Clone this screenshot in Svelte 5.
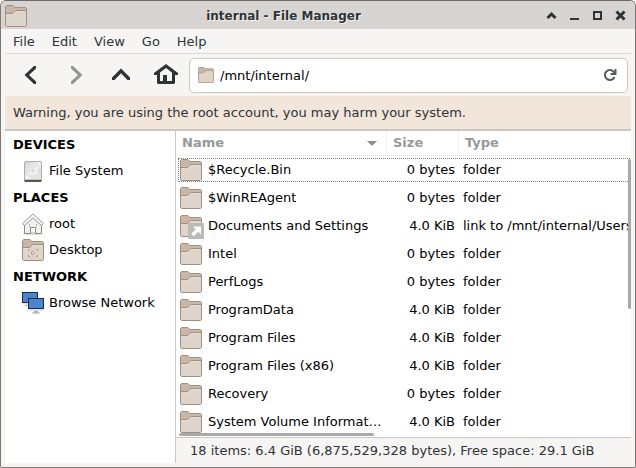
<script>
  const menus = ['File', 'Edit', 'View', 'Go', 'Help'];

  const sections = [
    { title: 'Devices', items: [{ name: 'File System', icon: 'drive' }] },
    {
      title: 'Places',
      items: [
        { name: 'root', icon: 'home' },
        { name: 'Desktop', icon: 'desktop' },
      ],
    },
    { title: 'Network', items: [{ name: 'Browse Network', icon: 'network' }] },
  ];

  const files = [
    { name: '$Recycle.Bin', size: '0 bytes', type: 'folder', focused: true },
    { name: '$WinREAgent', size: '0 bytes', type: 'folder' },
    { name: 'Documents and Settings', size: '4.0 KiB', type: 'link to /mnt/internal/Users', link: true },
    { name: 'Intel', size: '0 bytes', type: 'folder' },
    { name: 'PerfLogs', size: '0 bytes', type: 'folder' },
    { name: 'ProgramData', size: '4.0 KiB', type: 'folder' },
    { name: 'Program Files', size: '4.0 KiB', type: 'folder' },
    { name: 'Program Files (x86)', size: '4.0 KiB', type: 'folder' },
    { name: 'Recovery', size: '0 bytes', type: 'folder' },
    { name: 'System Volume Information', size: '4.0 KiB', type: 'folder' },
  ];

  let path = $state('/mnt/internal/');
</script>

{#snippet folder(size)}
  <svg width={size} height={size} viewBox="0 0 22 22" aria-hidden="true">
    <path d="M.5 20.5V1.5l1-1H8l2 2h10.5l1 1v17z" fill="#c8b6a6" stroke="#a38f7f" />
    <path d="M.5 8.5h7.2l3-3h10.8v15l-1 1h-19l-1-1z" fill="#ded4ca" stroke="#a38f7f" />
    <path d="M1.5 9.5h6.7l3-3h9.3" fill="none" stroke="#e7dfd7" />
  </svg>
{/snippet}

{#snippet placeIcon(kind)}
  {#if kind === 'drive'}
    <svg width="24" height="24" viewBox="0 0 24 24" aria-hidden="true">
      <defs>
        <linearGradient id="metal" x2="1" y2="1">
          <stop offset="0" stop-color="#d2d2ce" />
          <stop offset=".5" stop-color="#f4f4f2" />
          <stop offset="1" stop-color="#dcdcd9" />
        </linearGradient>
      </defs>
      <rect x="3.500" y="2.500" width="17" height="20" rx="1.500" fill="url(#metal)" stroke="#adada9" />
      <ellipse cx="12" cy="11" rx="7" ry="7.500" fill="#e6e6e3" stroke="#d8d8d5" />
      <path d="M6 15l5-3.500L18 6l-3 10z" fill="#f2f2f0" />
      <circle cx="12" cy="12" r="1.500" fill="#d4d4d1" />
      <path d="M4 20h16v1H4z" fill="#c2c2be" />
      <path d="M3.500 21h17v1.500l-1 .5h-15l-1-.5z" fill="#555753" />
    </svg>
  {:else if kind === 'home'}
    <svg width="24" height="24" viewBox="0 0 24 24" aria-hidden="true">
      <ellipse cx="12" cy="21.500" rx="10" ry="1.500" fill="#d6d6d4" />
      <path d="M3.500 11v10.500h6v-6h5v6h6V11L12 4z" fill="#f0f0ee" stroke="#888a85" />
      <path d="M12 2L1.500 11.500l2 2L12 6l8.500 7.500 2-2z" fill="#f4f4f2" stroke="#999b96" stroke-linejoin="round" />
      <path d="M8 12h1v3H8zM15 12h1v3h-1z" fill="#b6b8b3" />
    </svg>
  {:else if kind === 'desktop'}
    <span class="pad-icon">
      {@render folder(22)}
      <svg class="mark" width="12" height="10" viewBox="0 0 12 10" aria-hidden="true">
        <path d="M1.500 3V1.500H3M9 1.500h1.500V3M1.500 7v1.500H3M9 8.500h1.500V7M4.500 3.500h2l1 1v1l-1 1h-2z" fill="none" stroke="#b5a18f" />
      </svg>
    </span>
  {:else}
    <svg width="24" height="24" viewBox="0 0 24 24" aria-hidden="true">
      <rect x="1.500" y="1.500" width="15" height="10" fill="#4a86cf" stroke="#1b2b48" />
      <path d="M2 12h6v2H2z" fill="#e6e6e3" />
      <path d="M4 14h4v1H4z" fill="#b9bab6" />
      <rect x="7.500" y="7.500" width="15" height="10" fill="#4a86cf" stroke="#1b2b48" />
      <path d="M8 18h14v2H8z" fill="#e2e2df" />
      <path d="M13 20h4v1.500h2v1h-8v-1h2z" fill="#b0b1ad" />
    </svg>
  {/if}
{/snippet}

<div class="window">
  <header class="titlebar">
    {@render folder(22)}
    <h1>internal - File Manager</h1>
    <div class="controls">
      <button aria-label="Roll up"><svg width="11" height="11" viewBox="0 0 11 11"><path d="M1.500 8l4-4 4 4" class="bold" /></svg></button>
      <button aria-label="Minimize"><svg width="11" height="11" viewBox="0 0 11 11"><path d="M1 9h9" /></svg></button>
      <button aria-label="Maximize"><svg width="11" height="11" viewBox="0 0 11 11"><path d="M2 2h7v7H2z" /></svg></button>
      <button aria-label="Close"><svg width="11" height="11" viewBox="0 0 11 11"><path d="M1.500 1.500l8 8M9.500 1.500l-8 8" class="bold" /></svg></button>
    </div>
  </header>

  <nav class="menubar" aria-label="Menu">
    {#each menus as menu}
      <button>{menu}</button>
    {/each}
  </nav>

  <div class="toolbar">
    <button aria-label="Back"><svg width="25" height="24" viewBox="0 0 25 24"><path class="solid" d="M18 3h-2L6.500 12l9.500 9h2v-2.500L11 12l7-6.500z" /></svg></button>
    <button aria-label="Forward" disabled><svg width="25" height="24" viewBox="0 0 25 24"><path class="solid" d="M8 3h2l9.500 9-9.500 9H8v-2.500L15 12 8 5.500z" /></svg></button>
    <button aria-label="Parent folder"><svg width="25" height="24" viewBox="0 0 25 24"><path class="solid" d="M4 17v-2.500L13 5.500l9 9V17h-2.500L13 10.200 6.500 17z" /></svg></button>
    <button aria-label="Home">
      <svg width="25" height="24" viewBox="0 0 25 24">
        <path class="solid" fill-rule="evenodd" d="M13 1l12 9v2h-3v8l-1 1H5l-1-1v-8H1v-2zM7 9.500V18h3v-6h4v6h5V9.500l-6-4.500z" />
      </svg>
    </button>
    <div class="location">
      {@render folder(16)}
      <input type="text" aria-label="Location" bind:value={path} />
      <button aria-label="Reload">
        <svg width="14" height="14" viewBox="0 0 14 14">
          <path d="M11 4A5 5 0 1 0 11.500 9" class="arc" />
          <path d="M13.500 1v6h-6V5h2l2-2V1z" class="solid" />
        </svg>
      </button>
    </div>
  </div>

  <p class="warning" role="alert">Warning, you are using the root account, you may harm your system.</p>

  <div class="body">
    <aside>
      {#each sections as section}
        <h2>{section.title}</h2>
        <ul>
          {#each section.items as item}
            <li><a href="#{item.icon}">{@render placeIcon(item.icon)}{item.name}</a></li>
          {/each}
        </ul>
      {/each}
    </aside>

    <main>
      <div class="view">
        <table>
          <colgroup>
            <col class="c-name" />
            <col class="c-size" />
            <col />
          </colgroup>
          <thead>
            <tr>
              <th aria-sort="ascending"><span class="sort">Name <i></i></span></th>
              <th>Size</th>
              <th>Type</th>
            </tr>
          </thead>
          <tbody>
            {#each files as file}
              <tr class:focused={file.focused}>
                <td>
                  <span class="entry">
                    <span class="file-icon">
                      {@render folder(22)}
                      {#if file.link}
                        <svg class="emblem" width="16" height="16" viewBox="0 0 16 16" aria-hidden="true">
                          <rect width="16" height="16" rx="1" fill="#babab7" />
                          <path d="M5 3.500h8v8l-2.700-2.700-4.600 4.500-2.500-2.500 4.500-4.600z" fill="#fff" />
                        </svg>
                      {/if}
                    </span>
                    <span class="name">{file.name}</span>
                  </span>
                </td>
                <td class="size">{file.size}</td>
                <td>{file.type}</td>
              </tr>
            {/each}
          </tbody>
        </table>
        <div class="bar vertical"></div>
        <div class="bar horizontal"></div>
      </div>
      <footer>18 items: 6.4 GiB (6,875,529,328 bytes), Free space: 29.1 GiB</footer>
    </main>
  </div>
</div>

<style>
  :global(body) {
    margin: 0;
    background: #fff;
  }

  .window {
    box-sizing: border-box;
    display: flex;
    flex-direction: column;
    min-height: 100vh;
    padding: 0 4px 4px;
    border: 1px solid #7b7877;
    border-top-color: #6e6867;
    border-radius: 6px 6px 2px 2px;
    background: #f6f5f4;
    color: #2e3436;
    font: 13px/20px 'DejaVu Sans', sans-serif;
    overflow: hidden;
  }

  svg {
    display: block;
    flex: none;
  }

  button {
    display: flex;
    align-items: center;
    justify-content: center;
    padding: 0;
    border: 0;
    background: none;
    color: inherit;
    font: inherit;
  }

  button path {
    fill: none;
    stroke: currentColor;
    stroke-width: 2;
  }

  button .bold {
    stroke-width: 3;
  }

  button .solid {
    fill: currentColor;
    stroke: none;
  }

  .titlebar {
    box-sizing: border-box;
    display: flex;
    align-items: center;
    height: 28px;
    margin: 0 -4px;
    padding: 1px 3px 0 4px;
    background: #d8d4d1;
  }

  h1 {
    flex: 1;
    margin: 0;
    font-size: 12px;
    line-height: 20px;
    text-align: center;
    text-shadow: 1px 1px 0 #f4f3f2;
  }

  .controls {
    display: flex;
  }

  .controls button {
    width: 23px;
    height: 24px;
  }

  .menubar {
    box-sizing: border-box;
    display: flex;
    gap: 17px;
    height: 25px;
    padding: 2px 8px 0;
    border-bottom: 1px solid #dcdad8;
  }

  .toolbar {
    display: flex;
    align-items: center;
    height: 42px;
    padding: 0 3px;
  }

  .toolbar > button {
    width: 45px;
    height: 34px;
  }

  .toolbar > button:disabled {
    color: #929595;
  }

  .location {
    box-sizing: border-box;
    display: flex;
    flex: 1;
    align-items: center;
    gap: 6px;
    height: 35px;
    margin-left: 1px;
    padding: 0 10px 0 8px;
    border: 1px solid #cdc7c2;
    border-radius: 5px;
    background: #fff;
  }

  .location input {
    flex: 1;
    min-width: 0;
    padding: 2px 0 0;
    border: 0;
    outline: 0;
    background: none;
    color: #000;
    font: inherit;
  }

  .location button {
    color: #565b5c;
  }

  .warning {
    margin: 0;
    padding: 7px 8px 6px;
    border-bottom: 2px solid #cdc7c2;
    background: #f2e5da;
  }

  .body {
    display: flex;
    flex: 1;
    min-height: 0;
    color: #000;
  }

  aside {
    flex: 0 0 170px;
    border-right: 1px solid #cdc7c2;
    background: #fff;
  }

  h2 {
    margin: 0;
    padding-left: 8px;
    font-size: 13px;
    line-height: 27px;
    text-transform: uppercase;
  }

  ul {
    margin: 0;
    padding: 0;
    list-style: none;
  }

  aside a {
    display: flex;
    align-items: center;
    gap: 4px;
    height: 26px;
    padding-left: 16px;
    color: inherit;
    text-decoration: none;
  }

  .pad-icon {
    position: relative;
    padding: 1px;
  }

  .mark {
    position: absolute;
    top: 10px;
    left: 6px;
  }

  main {
    display: flex;
    flex: 1;
    flex-direction: column;
    min-width: 0;
  }

  .view {
    position: relative;
    flex: 1;
    background: #fff;
    overflow: hidden;
  }

  table {
    width: 200%;
    border-spacing: 0;
    table-layout: fixed;
  }

  .c-name {
    width: 211px;
  }

  .c-size {
    width: 72px;
  }

  th {
    height: 24px;
    padding: 0 9px 0 6px;
    border-right: 1px solid #f1f0ef;
    border-bottom: 1px solid #f1f0ef;
    color: #969a9a;
    text-align: left;
  }

  .sort {
    display: flex;
    align-items: center;
    justify-content: space-between;
  }

  .sort i {
    border: 5px solid transparent;
    border-top-color: #8b8e8f;
    border-bottom: 0;
  }

  td {
    height: 28px;
    padding: 0 4px;
    overflow: hidden;
    white-space: nowrap;
  }

  .entry {
    display: flex;
    align-items: center;
    gap: 6px;
  }

  .file-icon {
    position: relative;
  }

  .emblem {
    position: absolute;
    top: 8px;
    left: 8px;
  }

  .name {
    overflow: hidden;
    text-overflow: ellipsis;
  }

  .size {
    text-align: right;
  }

  .focused {
    outline: 1px dotted #808282;
    outline-offset: -3px;
  }

  .bar {
    position: absolute;
    border-radius: 2px;
    background: #a8aaaa;
  }

  .vertical {
    top: 28px;
    right: 0;
    width: 3px;
    height: 150px;
  }

  .horizontal {
    bottom: 1px;
    left: 3px;
    width: 195px;
    height: 3px;
  }

  footer {
    padding: 3px 14px 2px;
    border-top: 1px solid #cdc7c2;
    color: #2e3436;
  }
</style>
